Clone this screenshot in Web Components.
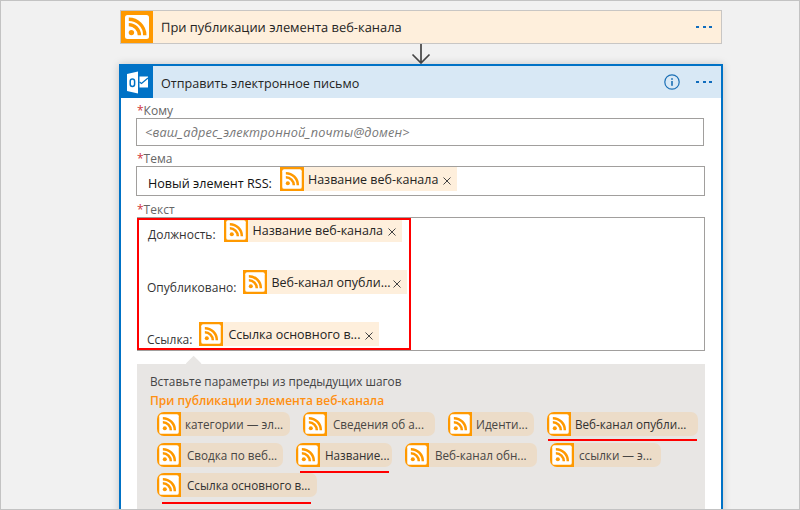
<!DOCTYPE html>
<html lang="ru">
<head>
<meta charset="utf-8">
<title>Flow</title>
<style>
html, body { margin: 0; height: 510px; overflow: hidden; }
body { font-family: "Open Sans", "Noto Sans", sans-serif; }
</style>
</head>
<body>
<flow-page>
  <flow-trigger title="При публикации элемента веб-канала"></flow-trigger>
  <flow-arrow></flow-arrow>
  <flow-action title="Отправить электронное письмо">
    <flow-field label="Кому" height="28" width="568">
      <span style="display:block;font:italic 12.7px 'Open Sans',sans-serif;letter-spacing:.2px;color:#777;padding-left:8px;line-height:27px;white-space:nowrap">&lt;ваш_адрес_электронной_почты@домен&gt;</span>
    </flow-field>
    <flow-field label="Тема" height="30" width="569" top="6">
      <flow-line pad="11" gap="8">
        <flow-text size="12.6" color="#111">Новый элемент RSS:</flow-text>
        <flow-token width="177" up="2" size="12.5" pad="4">Название веб-канала</flow-token>
      </flow-line>
    </flow-field>
    <flow-field label="Текст" height="134" width="568" top="7" left="1">
      <flow-body>
        <flow-line pad="9" gap="8">
          <flow-text up="2">Должность:</flow-text>
          <flow-token width="178" up="4" size="12.5">Название веб-канала</flow-token>
        </flow-line>
        <flow-line pad="8" gap="7" top="26">
          <flow-text up="1">Опубликовано:</flow-text>
          <flow-token width="164" up="4" size="12.5" pad="4">Веб-канал опубли...</flow-token>
        </flow-line>
        <flow-line pad="8" gap="7" top="26">
          <flow-text up="1">Ссылка:</flow-text>
          <flow-token width="180" up="4" size="12.5">Ссылка основного в...</flow-token>
        </flow-line>
      </flow-body>
    </flow-field>
    <flow-params>
      <flow-chip width="133" pad="4">категории — эл...</flow-chip>
      <flow-chip width="132" pad="6">Сведения об а...</flow-chip>
      <flow-chip width="86" pad="4">Иденти...</flow-chip>
      <flow-chip width="151" pad="4" mark="1 1 3">Веб-канал опубли...</flow-chip>
      <flow-chip width="126" pad="6">Сводка по веб...</flow-chip>
      <flow-chip width="96" pad="5" mark="4 3 4">Название...</flow-chip>
      <flow-chip width="132" pad="6">Веб-канал обн...</flow-chip>
      <flow-chip width="111" pad="5">ссылки — э...</flow-chip>
      <flow-chip width="160" pad="6" mark="5 6 5" style="margin-top:-1px">Ссылка основного в...</flow-chip>
    </flow-params>
  </flow-action>
</flow-page>

<script>
const rssSvg = (inset) => {
  const s = 32 - inset * 2;
  return `<svg viewBox="0 0 32 32" width="100%" height="100%" style="display:block">
    <rect width="32" height="32" fill="#ff9900"/>
    <rect x="${inset}" y="${inset}" width="${s}" height="${s}" rx="2.5" fill="#fff"/>
    <circle cx="10.4" cy="21.6" r="2.7" fill="#ff9900"/>
    <path d="M7.8 13.6a10.6 10.6 0 0 1 10.6 10.6M7.8 8.2a16 16 0 0 1 16 16" fill="none" stroke="#ff9900" stroke-width="3.4"/>
  </svg>`;
};

const dots = `<svg width="16" height="4" viewBox="0 0 16 4" style="display:block">
  <rect x="0" y="1" width="3" height="2" fill="#0f6cbd"/><rect x="7" y="1" width="3" height="2" fill="#0f6cbd"/><rect x="13" y="1" width="3" height="2" fill="#0f6cbd"/></svg>`;

class FlowPage extends HTMLElement {
  connectedCallback() {
    this.attachShadow({ mode: 'open' }).innerHTML = `
      <style>
        :host { display: block; box-sizing: border-box; width: 800px; height: 510px; overflow: hidden;
          background: #f1f1f1; border: 1px solid #c3c3c3; padding-top: 9px; }
        .col { width: 604px; margin-left: 118px; }
      </style>
      <div class="col"><slot></slot></div>`;
  }
}

class FlowTrigger extends HTMLElement {
  connectedCallback() {
    this.attachShadow({ mode: 'open' }).innerHTML = `
      <style>
        :host { display: flex; box-sizing: border-box; height: 34px; margin: 0 1px; align-items: center;
          background: #feefdc; border: 1px solid #c8c6c4; color: #252423; font-size: 12.9px; text-rendering: geometricPrecision; }
        .ic { width: 32px; height: 32px; flex: none; }
        .t { flex: 1; padding-left: 8px; }
        .m { padding-right: 9px; }
      </style>
      <div class="ic">${rssSvg(4)}</div>
      <div class="t">${this.getAttribute('title')}</div>
      <div class="m">${dots}</div>`;
  }
}

class FlowArrow extends HTMLElement {
  connectedCallback() {
    this.attachShadow({ mode: 'open' }).innerHTML = `
      <style>:host { display: block; height: 20px; } svg { display: block; margin-left: 292px; }</style>
      <svg width="20" height="20" viewBox="0 0 20 20" fill="none" stroke="#444" stroke-width="1.7">
        <path d="M10 0V19M1.5 10.5L10 19L18.5 10.5"/></svg>`;
  }
}

class FlowAction extends HTMLElement {
  connectedCallback() {
    this.attachShadow({ mode: 'open' }).innerHTML = `
      <style>
        :host { display: block; box-sizing: border-box; height: 460px; background: #fff;
          border: 2px solid #0072c6; box-shadow: 0 0 8px rgba(0,0,0,.18); }
        .head { display: flex; align-items: center; height: 32px; background: #d8e8f5; color: #252423; font-size: 12.6px; }
        .ic { width: 32px; height: 32px; flex: none; background: #0072c6; }
        .t { flex: 1; padding-left: 8px; position: relative; top: 1px; }
        .info { margin-right: 16px; display: block; }
        .m { padding-right: 9px; }
        .body { padding: 6px 16px 0 15px; }
      </style>
      <div class="head">
        <div class="ic">
          <svg viewBox="0 0 32 32" width="32" height="32" style="display:block">
            <path d="M6 8L17 5.5V27.5L6 25Z" fill="#fff"/>
            <rect x="9.2" y="13" width="4.4" height="7.4" rx="2.2" fill="none" stroke="#0072c6" stroke-width="1.5"/>
            <path d="M18.5 10.5H27V21.5H18.5Z" fill="#fff"/>
            <path d="M18.5 16L20.5 17.5L27 12" fill="none" stroke="#0072c6" stroke-width="1.3"/>
          </svg>
        </div>
        <div class="t">${this.getAttribute('title')}</div>
        <svg class="info" width="16" height="16" viewBox="0 0 16 16" fill="none">
          <circle cx="8" cy="8" r="7.2" stroke="#1a6fb5" stroke-width="1.2"/>
          <rect x="7.2" y="7" width="1.6" height="4.8" fill="#1a6fb5"/><rect x="7.2" y="4.2" width="1.6" height="1.6" fill="#1a6fb5"/>
        </svg>
        <div class="m">${dots}</div>
      </div>
      <div class="body"><slot></slot></div>`;
  }
}

class FlowField extends HTMLElement {
  connectedCallback() {
    const left = this.getAttribute('left') || 0;
    this.attachShadow({ mode: 'open' }).innerHTML = `
      <style>
        :host { display: block; margin-top: ${this.getAttribute('top') || 0}px; }
        .lab { height: 14px; line-height: 14px; font-size: 12px; color: #666; padding-left: 1px; }
        .lab b { color: #d13438; font-weight: 400; }
        .box { box-sizing: border-box; height: ${this.getAttribute('height')}px; width: ${this.getAttribute('width')}px; margin-left: ${left}px;
          border: 1px solid #a19f9d; background: #fff; display: flow-root; }
      </style>
      <div class="lab"><b>*</b>${this.getAttribute('label')}</div>
      <div class="box"><slot></slot></div>`;
  }
}

class FlowBody extends HTMLElement {
  connectedCallback() {
    this.attachShadow({ mode: 'open' }).innerHTML = `
      <style>
        :host { display: block; box-sizing: border-box; width: 274px; height: 132px; border: 2px solid #f00; margin-left: -1px; }
        .clip { height: 128px; overflow: hidden; }
      </style>
      <div class="clip"><slot></slot></div>`;
  }
}

class FlowLine extends HTMLElement {
  connectedCallback() {
    this.attachShadow({ mode: 'open' }).innerHTML = `
      <style>
        :host { display: flex; align-items: flex-end; gap: ${this.getAttribute('gap') || 0}px; padding-left: ${this.getAttribute('pad') || 0}px;
          margin-top: ${this.getAttribute('top') || 0}px; height: 26px; }
      </style>
      <slot></slot>`;
  }
}

class FlowText extends HTMLElement {
  connectedCallback() {
    this.attachShadow({ mode: 'open' }).innerHTML = `
      <style>:host { display: block; font-size: ${this.getAttribute('size') || 12}px; line-height: 18px; color: ${this.getAttribute('color') || '#333'}; white-space: nowrap;
        position: relative; top: -${this.getAttribute('up') || 0}px; }</style>
      <slot></slot>`;
  }
}

class FlowToken extends HTMLElement {
  connectedCallback() {
    this.attachShadow({ mode: 'open' }).innerHTML = `
      <style>
        :host { display: flex; box-sizing: border-box; width: ${this.getAttribute('width')}px; height: 24px; align-items: center;
          background: #feefdc; color: #252423; font-size: ${this.getAttribute('size') || 12}px; position: relative; top: -${this.getAttribute('up') || 0}px; white-space: nowrap; }
        .ic { width: 24px; height: 24px; flex: none; }
        .t { flex: 1; padding-left: ${this.getAttribute('pad') || 5}px; }
        .x { flex: none; margin-right: 6px; position: relative; top: 2px; }
      </style>
      <div class="ic">${rssSvg(3)}</div>
      <div class="t"><slot></slot></div>
      <svg class="x" width="8" height="8" viewBox="0 0 8 8"><path d="M.5.5L7.5 7.5M7.5.5L.5 7.5" stroke="#444" fill="none"/></svg>`;
  }
}

class FlowParams extends HTMLElement {
  connectedCallback() {
    this.attachShadow({ mode: 'open' }).innerHTML = `
      <style>
        :host { display: block; position: relative; box-sizing: border-box; width: 568px; height: 146px; margin: 13px 0 0 1px; padding: 9px 0 0 13px; background: #e8e6e4; }
        :host::before { content: ""; position: absolute; left: 51px; top: -6px; width: 11.3px; height: 11.3px; background: #e8e6e4; transform: rotate(45deg); }
        .h { font-size: 11.8px; line-height: 16px; color: #444; position: relative; }
        .o { font-size: 12px; line-height: 16px; color: #ff9012; font-weight: 600; margin-top: 4px; }
        .wrap { display: flex; flex-wrap: wrap; gap: 7px 13px; padding: 3px 0 0 7px; }
      </style>
      <div class="h">Вставьте параметры из предыдущих шагов</div>
      <div class="o">При публикации элемента веб-канала</div>
      <div class="wrap"><slot></slot></div>`;
  }
}

class FlowChip extends HTMLElement {
  connectedCallback() {
    const mark = this.getAttribute('mark');
    const [l, r, b] = mark ? mark.split(' ') : [];
    this.attachShadow({ mode: 'open' }).innerHTML = `
      <style>
        :host { display: flex; position: relative; box-sizing: border-box; width: ${this.getAttribute('width')}px; height: 24px; align-items: center;
          background: #ecdcc8; border-radius: 7px; color: ${mark ? '#323130' : '#484644'}; font-size: 11.7px; white-space: nowrap; }
        .ic { width: 24px; height: 24px; flex: none; border-radius: 7px 0 0 7px; overflow: hidden; }
        .t { flex: 1; padding-left: ${this.getAttribute('pad')}px; }
        .u { position: absolute; left: ${l}px; right: ${r}px; bottom: -${+b + 2}px; height: 2px; background: #f00; }
      </style>
      <div class="ic">${rssSvg(3)}</div>
      <div class="t"><slot></slot></div>
      ${mark ? '<div class="u"></div>' : ''}`;
  }
}

customElements.define('flow-page', FlowPage);
customElements.define('flow-trigger', FlowTrigger);
customElements.define('flow-arrow', FlowArrow);
customElements.define('flow-action', FlowAction);
customElements.define('flow-field', FlowField);
customElements.define('flow-body', FlowBody);
customElements.define('flow-line', FlowLine);
customElements.define('flow-text', FlowText);
customElements.define('flow-token', FlowToken);
customElements.define('flow-params', FlowParams);
customElements.define('flow-chip', FlowChip);
</script>
</body>
</html>
